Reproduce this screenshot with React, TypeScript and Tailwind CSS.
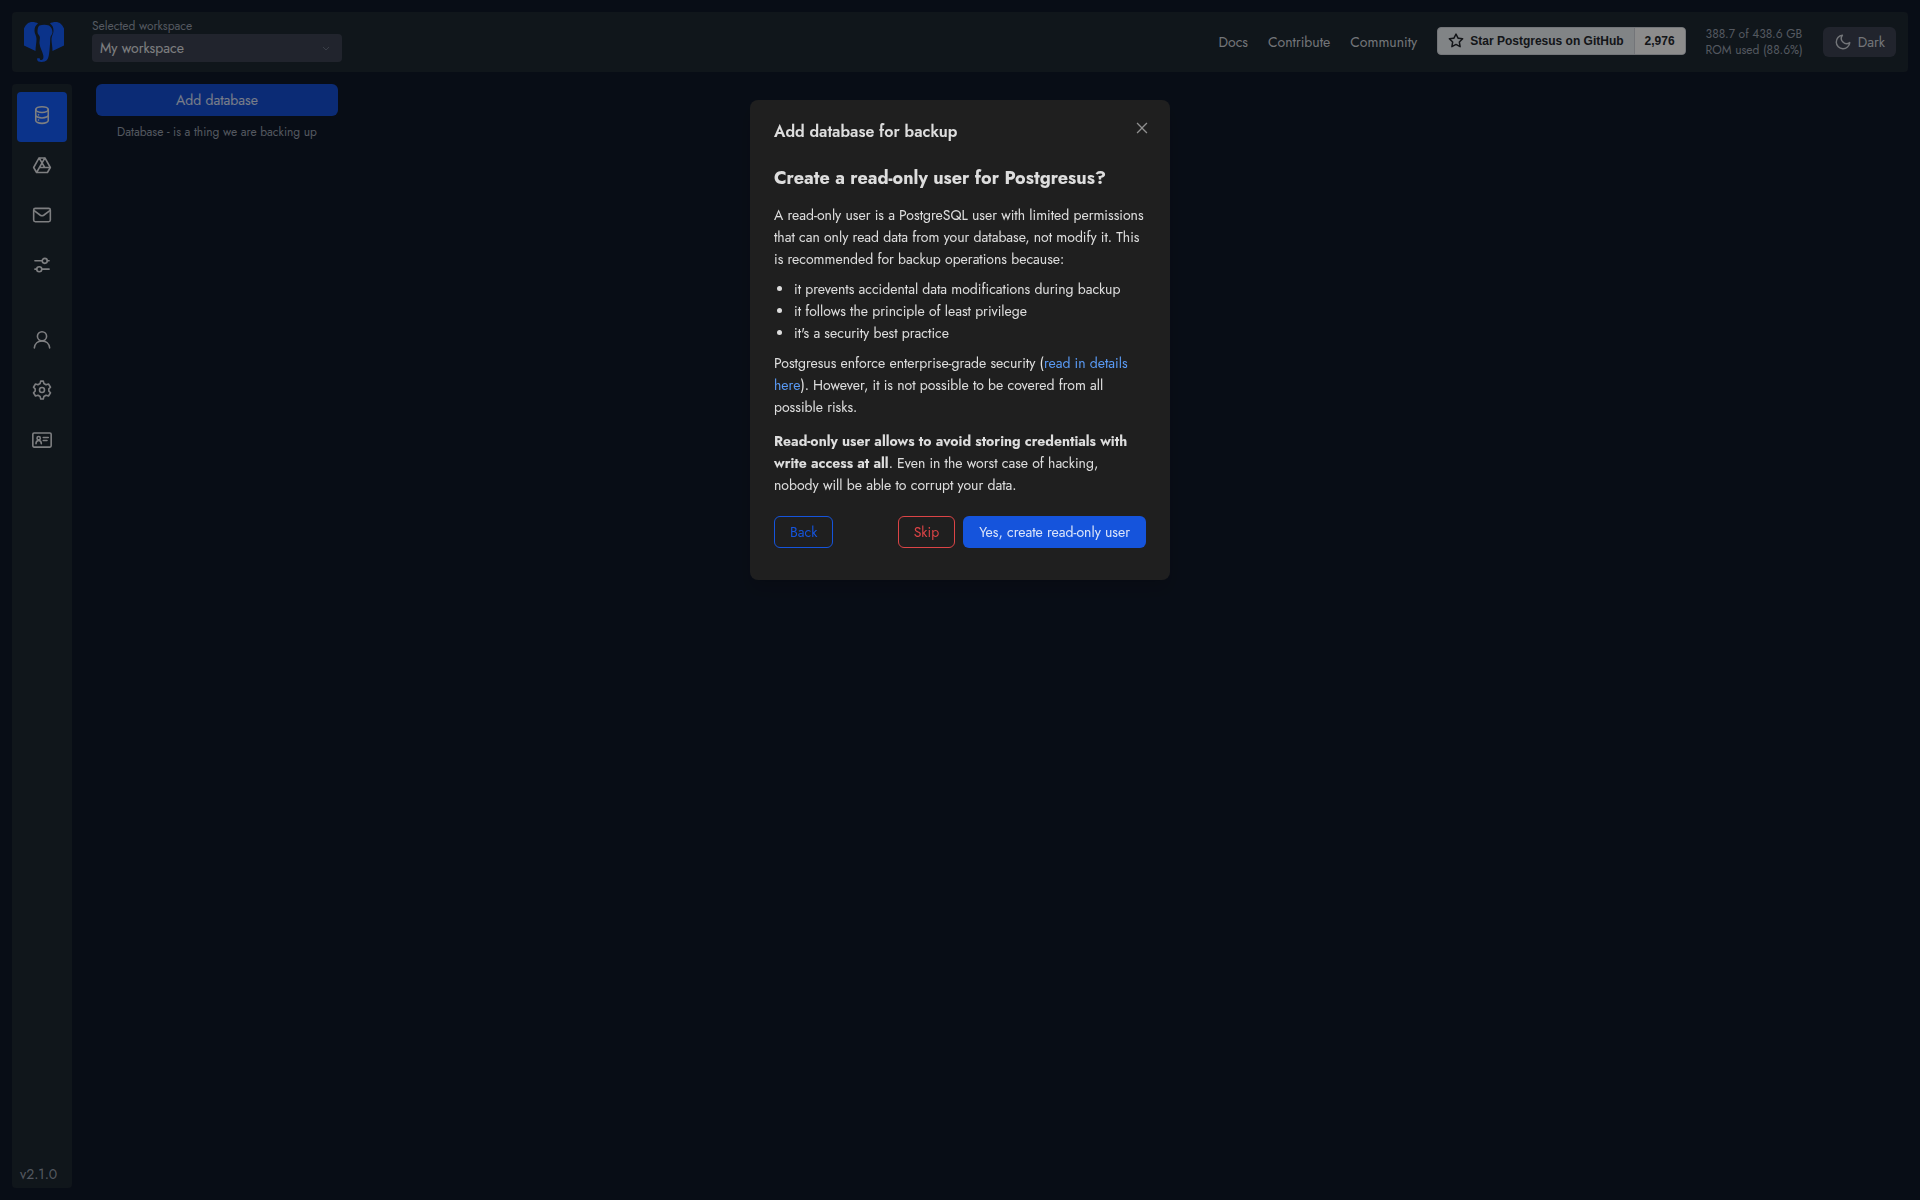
import type { ReactNode } from "react";
import { AiOutlineClose } from "react-icons/ai";

function Icon({ children, size = 20 }: { children: ReactNode; size?: number }) {
  return (
    <svg
      width={size}
      height={size}
      viewBox="0 0 24 24"
      fill="none"
      stroke="currentColor"
      strokeWidth={1.9}
      strokeLinecap="round"
      strokeLinejoin="round"
      aria-hidden="true"
    >
      {children}
    </svg>
  );
}

function Logo() {
  return (
    <svg width="40" height="40" viewBox="0 0 40 40" fill="#155dfc" aria-hidden="true">
      <path d="M0 6.500C2 2 5 0 8 0c2.500 0 5 .5 6 1.500-2.500 1.800-3.500 4-3.500 7.500 0 3 2 4.500 2 8 0 4.500-1 7-1 12L0 23.500z" />
      <path d="M40 6.500C38 2 35 0 32 0c-2.500 0-5 .5-6 1.500 2.500 1.800 3.500 4 3.500 7.500 0 3-2 4.500-2 8 0 4.500 1 7 1 12L40 23.500z" />
      <path d="M15.500 3.500c3-1 6.500-1 9.500 0 2 1.200 3.500 4 3.500 7 0 2-2 3-2.200 5.500-.2 4-.3 8-.8 12-.5 4.500-.8 8-2.500 10-1.500 2-6 2.500-8.500 1.500-1.200-.5-1.600-1.700-1.200-3.300h2.400c0 1.300.5 1.800 1.600 1.800 2.200 0 2.400-2.500 1.900-5-.8-4-3.200-7-3.700-11.500-.3-2.500.8-4.500.2-7-.4-1.600-2.200-2.300-2.200-4.500 0-3 .5-5.300 2-6.500z" />
    </svg>
  );
}

const tabs = [
  {
    label: "Databases",
    icon: (
      <>
        <ellipse cx="12" cy="5.500" rx="7.500" ry="3.500" />
        <path d="M4.500 5.500v13c0 1.900 3.400 3.500 7.500 3.500s7.500-1.600 7.500-3.500v-13M4.500 12c0 1.900 3.400 3.500 7.500 3.500s7.500-1.600 7.500-3.500" />
        <path d="M7.800 11.800h.01M7.800 18h.01" />
      </>
    ),
  },
  {
    label: "Storages",
    icon: <path d="M8.500 3.500h7L22 15l-3.500 6h-13L2 15zM8.500 3.500 15.300 15H22M15.500 3.500 5.500 21M9 15h6" />,
  },
  {
    label: "Notifiers",
    icon: (
      <>
        <rect x="2" y="4" width="20" height="16" rx="2" />
        <path d="m3 7 7 5.300c1.200.8 2.800.8 4 0L21 7" />
      </>
    ),
  },
  {
    label: "Settings",
    icon: (
      <>
        <path d="M3.500 7H12M18.500 7h2M3.500 17h2M12 17h8.500" />
        <circle cx="15.300" cy="7" r="3" />
        <circle cx="8.700" cy="17" r="3" />
      </>
    ),
  },
];

const adminTabs = [
  {
    label: "Profile",
    icon: (
      <>
        <circle cx="12" cy="7.500" r="5.500" />
        <path d="M2.800 21.500c.5-5 4.300-8.500 9.200-8.500s8.700 3.500 9.200 8.500" />
      </>
    ),
  },
  {
    label: "Postgresus settings",
    icon: (
      <>
        <path d="M9.700 4.200 10.500 1.300h3l.8 2.900 2.500 1.500 3-.9 2.400 3.900-2 2v2.600l2 2-2.400 3.900-3-.9-2.500 1.500-.8 2.900h-3l-.8-2.900-2.500-1.500-3 .9-2.400-3.900 2-2v-2.600l-2-2 2.400-3.900 3 .9z" />
        <circle cx="12" cy="12" r="3" />
      </>
    ),
  },
  {
    label: "Users",
    icon: (
      <>
        <rect x="1" y="3.500" width="22" height="17" rx="1.500" />
        <circle cx="8" cy="9.800" r="2" />
        <path d="M4.800 16.500c0-2.300 1.200-4 3.200-4s3.200 1.700 3.200 4M13.500 9h6M13.500 12.500h4.500" />
      </>
    ),
  },
];

function Header() {
  return (
    <header className="flex h-[60px] items-center rounded bg-[#1e2832] px-3">
      <Logo />
      <div className="ml-7 flex flex-col pb-1">
        <label htmlFor="workspace" className="text-xs text-gray-400">
          Selected workspace
        </label>
        <div className="relative w-[250px]">
          <select
            id="workspace"
            className="h-7 w-full appearance-none rounded bg-[#3d4352] px-2 text-sm text-gray-200"
          >
            <option>My workspace</option>
          </select>
          <svg
            className="pointer-events-none absolute top-2 right-3 text-gray-500"
            width="8"
            height="12"
            viewBox="0 0 8 12"
            fill="none"
            stroke="currentColor"
            aria-hidden="true"
          >
            <path d="m1 5 3 3 3-3" />
          </svg>
        </div>
      </div>

      <nav className="ml-auto flex items-center gap-5 text-sm text-gray-300">
        <a href="#docs">Docs</a>
        <a href="#contribute">Contribute</a>
        <a href="#community">Community</a>
      </nav>

      <a
        href="#github"
        className="mb-0.5 ml-5 flex h-7 items-stretch overflow-hidden rounded-sm border border-gray-300 bg-[#ebf0f4] font-['Liberation_Sans',Arial,sans-serif] text-xs font-bold text-[#25292e]"
      >
        <span className="flex items-center gap-1.5 px-2.5">
          <svg width="16" height="16" viewBox="0 0 16 16" fill="currentColor" aria-hidden="true">
            <path d="M8 .25a.75.75 0 0 1 .673.418l1.882 3.815 4.210.612a.75.75 0 0 1 .416 1.279l-3.046 2.970.719 4.192a.751.751 0 0 1-1.088.791L8 12.347l-3.766 1.980a.75.75 0 0 1-1.088-.790l.720-4.194L.818 6.374a.75.75 0 0 1 .416-1.280l4.210-.611L7.327.668A.75.75 0 0 1 8 .25Zm0 2.445L6.615 5.500a.75.75 0 0 1-.564.410l-3.097.450 2.240 2.184a.75.75 0 0 1 .216.664l-.528 3.084 2.769-1.456a.75.75 0 0 1 .698 0l2.770 1.456-.530-3.084a.75.75 0 0 1 .216-.664l2.240-2.183-3.096-.450a.75.75 0 0 1-.564-.410L8 2.694Z" />
          </svg>
          Star Postgresus on GitHub
        </span>
        <span className="flex items-center border-l border-gray-300 bg-white px-2.5">2,976</span>
      </a>

      <p className="ml-5 text-xs text-gray-400">
        388.7 of 438.6 GB
        <br />
        ROM used (88.6%)
      </p>

      <button
        type="button"
        className="ml-5 flex h-[30px] items-center gap-1.5 rounded-md bg-[#3d4352] px-[11px] text-sm text-gray-300"
      >
        <Icon size={18}>
          <path d="M21 12.790A9 9 0 1 1 11.210 3 7 7 0 0 0 21 12.790z" />
        </Icon>
        Dark
      </button>
    </header>
  );
}

function Sidebar() {
  return (
    <aside className="flex w-[60px] flex-col items-center rounded bg-[#1e2832] pt-2 pb-1 text-gray-200">
      {tabs.map((tab, i) => (
        <button
          key={tab.label}
          type="button"
          aria-label={tab.label}
          className={`flex h-[50px] w-[50px] items-center justify-center rounded pb-1 ${i === 0 ? "bg-[#155dfc]" : ""}`}
        >
          <Icon>{tab.icon}</Icon>
        </button>
      ))}
      <div className="mt-[25px] flex flex-col">
        {adminTabs.map((tab) => (
          <button
            key={tab.label}
            type="button"
            aria-label={tab.label}
            className="flex h-[50px] w-[50px] items-center justify-center pb-1"
          >
            <Icon>{tab.icon}</Icon>
          </button>
        ))}
      </div>
      <span className="mt-auto w-full px-2 text-sm text-gray-400">v2.1.0</span>
    </aside>
  );
}

function ReadOnlyUserModal() {
  return (
    <div className="fixed inset-0 flex items-start justify-center bg-black/45 pt-[100px]">
      <div
        role="dialog"
        aria-labelledby="modal-title"
        className="w-[420px] rounded-lg bg-[#1f1f1f] px-6 pt-5 pb-8 text-sm leading-[22px] text-white/85 shadow-lg"
      >
        <div className="flex items-start justify-between">
          <h1 id="modal-title" className="text-base leading-6 font-semibold">
            Add database for backup
          </h1>
          <button type="button" aria-label="Close" className="-mr-1 text-white/50">
            <AiOutlineClose size={16} />
          </button>
        </div>

        <h2 className="mt-5 text-lg leading-7 font-bold">Create a read-only user for Postgresus?</h2>

        <p className="mt-3">
          A read-only user is a PostgreSQL user with limited permissions that can only read data from your
          database, not modify it. This is recommended for backup operations because:
        </p>

        <ul className="mt-2 list-disc pl-5">
          <li>it prevents accidental data modifications during backup</li>
          <li>it follows the principle of least privilege</li>
          <li>it's a security best practice</li>
        </ul>

        <p className="mt-2">
          Postgresus enforce enterprise-grade security (
          <a href="#security" className="text-[#5a9bf6]">
            read in details here
          </a>
          ). However, it is not possible to be covered from all possible risks.
        </p>

        <p className="mt-3">
          <b>Read-only user allows to avoid storing credentials with write access at all</b>. Even in the
          worst case of hacking, nobody will be able to corrupt your data.
        </p>

        <div className="mt-5 flex gap-2">
          <button type="button" className="h-8 rounded-md border border-[#1554dc] px-[15px] text-[#1554dc]">
            Back
          </button>
          <button type="button" className="ml-auto h-8 rounded-md border border-[#dc4446] px-[15px] text-[#dc4446]">
            Skip
          </button>
          <button type="button" className="h-8 rounded-md bg-[#1554dc] px-4">
            Yes, create read-only user
          </button>
        </div>
      </div>
    </div>
  );
}

export default function App() {
  return (
    <div className="flex min-h-screen flex-col gap-3 bg-gray-900 p-3 font-['Jost','Lato',sans-serif]">
      <Header />
      <div className="flex grow">
        <Sidebar />
        <main className="ml-6 w-[242px]">
          <button type="button" className="h-8 w-full rounded-md bg-[#154fd6] text-sm text-white/85">
            Add database
          </button>
          <p className="mt-2 text-center text-xs text-gray-400">Database - is a thing we are backing up</p>
        </main>
      </div>
      <ReadOnlyUserModal />
    </div>
  );
}
